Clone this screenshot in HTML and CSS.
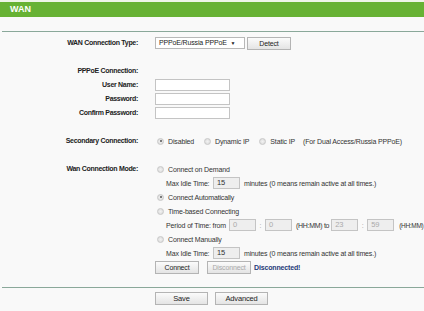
FILE: index.html
```html
<!DOCTYPE html>
<html lang="en">
<head>
	<meta charset="UTF-8">
	<title>WAN</title>
	<link rel="stylesheet" href="styles.css">
</head>
<body>
	<div class="top-strip"></div>
	<div class="title-bar">WAN</div>
	<div class="rule"></div>

	<div class="form">
		<div class="label">WAN Connection Type:</div>
		<div class="field">
			<div class="select">PPPoE/Russia PPPoE <span class="arrow">&#9660;</span></div>
			<div class="btn btn-detect">Detect</div>
		</div>

		<div class="label"></div><div class="field"></div>

		<div class="label">PPPoE Connection:</div><div class="field"></div>
		<div class="label">User Name:</div>
		<div class="field"><div class="input wide"></div></div>
		<div class="label">Password:</div>
		<div class="field"><div class="input wide"></div></div>
		<div class="label">Confirm Password:</div>
		<div class="field"><div class="input wide"></div></div>

		<div class="label"></div><div class="field"></div>

		<div class="label">Secondary Connection:</div>
		<div class="field">
			<span class="radio checked"></span><span class="opt">Disabled</span>
			<span class="radio"></span><span class="opt">Dynamic IP</span>
			<span class="radio"></span><span class="opt">Static IP</span>
			<span class="note">(For Dual Access/Russia PPPoE)</span>
		</div>

		<div class="label"></div><div class="field"></div>

		<div class="label">Wan Connection Mode:</div>
		<div class="field">
			<span class="radio"></span><span>Connect on Demand</span>
		</div>
		<div class="label"></div>
		<div class="field indent">
			<span class="sub-label">Max Idle Time:</span>
			<div class="input small">15</div>
			<span class="mins">minutes (0 means remain active at all times.)</span>
		</div>
		<div class="label"></div>
		<div class="field">
			<span class="radio checked"></span><span>Connect Automatically</span>
		</div>
		<div class="label"></div>
		<div class="field">
			<span class="radio"></span><span>Time-based Connecting</span>
		</div>
		<div class="label"></div>
		<div class="field indent">
			<span class="period-label">Period of Time: from</span>
			<div class="input small off">0</div>
			<span class="colon">:</span>
			<div class="input small off">0</div>
			<span class="hhmm">(HH:MM) to</span>
			<div class="input small off">23</div>
			<span class="colon">:</span>
			<div class="input small off">59</div>
			<span class="hhmm last">(HH:MM)</span>
		</div>
		<div class="label"></div>
		<div class="field">
			<span class="radio"></span><span>Connect Manually</span>
		</div>
		<div class="label"></div>
		<div class="field indent">
			<span class="sub-label">Max Idle Time:</span>
			<div class="input small">15</div>
			<span class="mins">minutes (0 means remain active at all times.)</span>
		</div>
		<div class="label"></div>
		<div class="field">
			<div class="btn">Connect</div>
			<div class="btn disabled">Disconnect</div>
			<span class="status">Disconnected!</span>
		</div>
	</div>

	<div class="rule bottom"></div>
	<div class="footer">
		<div class="btn btn-big">Save</div>
		<div class="btn btn-big">Advanced</div>
	</div>
</body>
</html>
```

FILE: styles.css
```css
*{
	margin: 0;
	padding: 0;
	box-sizing: border-box;
}
body{
	background-color: #f9f9f9;
	font-family: "Liberation Sans", Arial, sans-serif;
	font-size: 7px;
	letter-spacing: -0.15px;
	color: #333;
}
.top-strip{
	height: 2px;
	background-color: #eef5e8;
}
.title-bar{
	height: 15px;
	line-height: 15px;
	background-color: #67b234;
	color: #fff;
	font-weight: bold;
	font-size: 9px;
	letter-spacing: 0;
	padding-left: 10px;
}
.rule{
	height: 1px;
	margin: 14px 0 3px 2px;
	background-color: #8aa89a;
}
.form{
	display: grid;
	grid-template-columns: 138px 1fr;
	column-gap: 17px;
	grid-auto-rows: 14px;
	padding-top: 1px;
}
.label{
	text-align: right;
	font-weight: bold;
	line-height: 14px;
	letter-spacing: -0.3px;
	color: #222;
}
.field{
	display: flex;
	align-items: center;
	white-space: nowrap;
}
.field.indent{
	padding-left: 11px;
}
.select{
	width: 90px;
	height: 12px;
	border: 1px solid #b8b8b8;
	background-color: #fff;
	line-height: 10px;
	padding-left: 3px;
	color: #222;
}
.select .arrow{
	font-size: 5px;
	margin-left: 2px;
}
.btn{
	height: 13px;
	line-height: 11px;
	width: 44px;
	text-align: center;
	border: 1px solid #b4b4b4;
	background: linear-gradient(#fbfbfb, #e4e4e4);
	color: #222;
	margin-right: 8px;
}
.btn.disabled{
	color: #aaa;
	margin-right: 3px;
}
.btn-detect{
	margin-left: 2px;
}
.input{
	height: 12px;
	border: 1px solid #c4c4c4;
	background-color: #fff;
}
.input.wide{
	width: 75px;
}
.input.small{
	width: 27px;
	background-color: #eeeeee;
	line-height: 10px;
	padding-left: 3px;
	font-size: 7.5px;
	color: #333;
}
.input.off{
	color: #aaa;
}
.radio{
	display: inline-block;
	width: 7px;
	height: 7px;
	border-radius: 50%;
	border: 1px solid #c8c8c8;
	background: radial-gradient(circle, #f2f2f2, #d8d8d8);
	margin: 0 4px 0 2px;
	position: relative;
}
.radio.checked::after{
	content: "";
	position: absolute;
	left: 1.5px;
	top: 1.5px;
	width: 2px;
	height: 2px;
	border-radius: 50%;
	background-color: #555;
}
.opt{
	margin-right: 8px;
}
.note{
	margin-left: 0;
}
.sub-label{
	width: 47px;
}
.mins{
	margin-left: 4px;
}
.period-label{
	width: 63px;
}
.colon{
	width: 9px;
	text-align: center;
	color: #999;
}
.hhmm{
	margin: 0 2px 0 4px;
	letter-spacing: -0.3px;
}
.hhmm.last{
	margin-left: 5px;
	margin-right: 0;
	font-size: 6.5px;
}
.status{
	color: #1f3a78;
	font-weight: bold;
}
.rule.bottom{
	margin: 13px 0 4px 2px;
}
.footer{
	display: flex;
	justify-content: flex-start;
	padding-left: 155px;
	gap: 7px;
}
.btn-big{
	width: 53px;
	margin-right: 0;
	font-size: 7.5px;
}
```
